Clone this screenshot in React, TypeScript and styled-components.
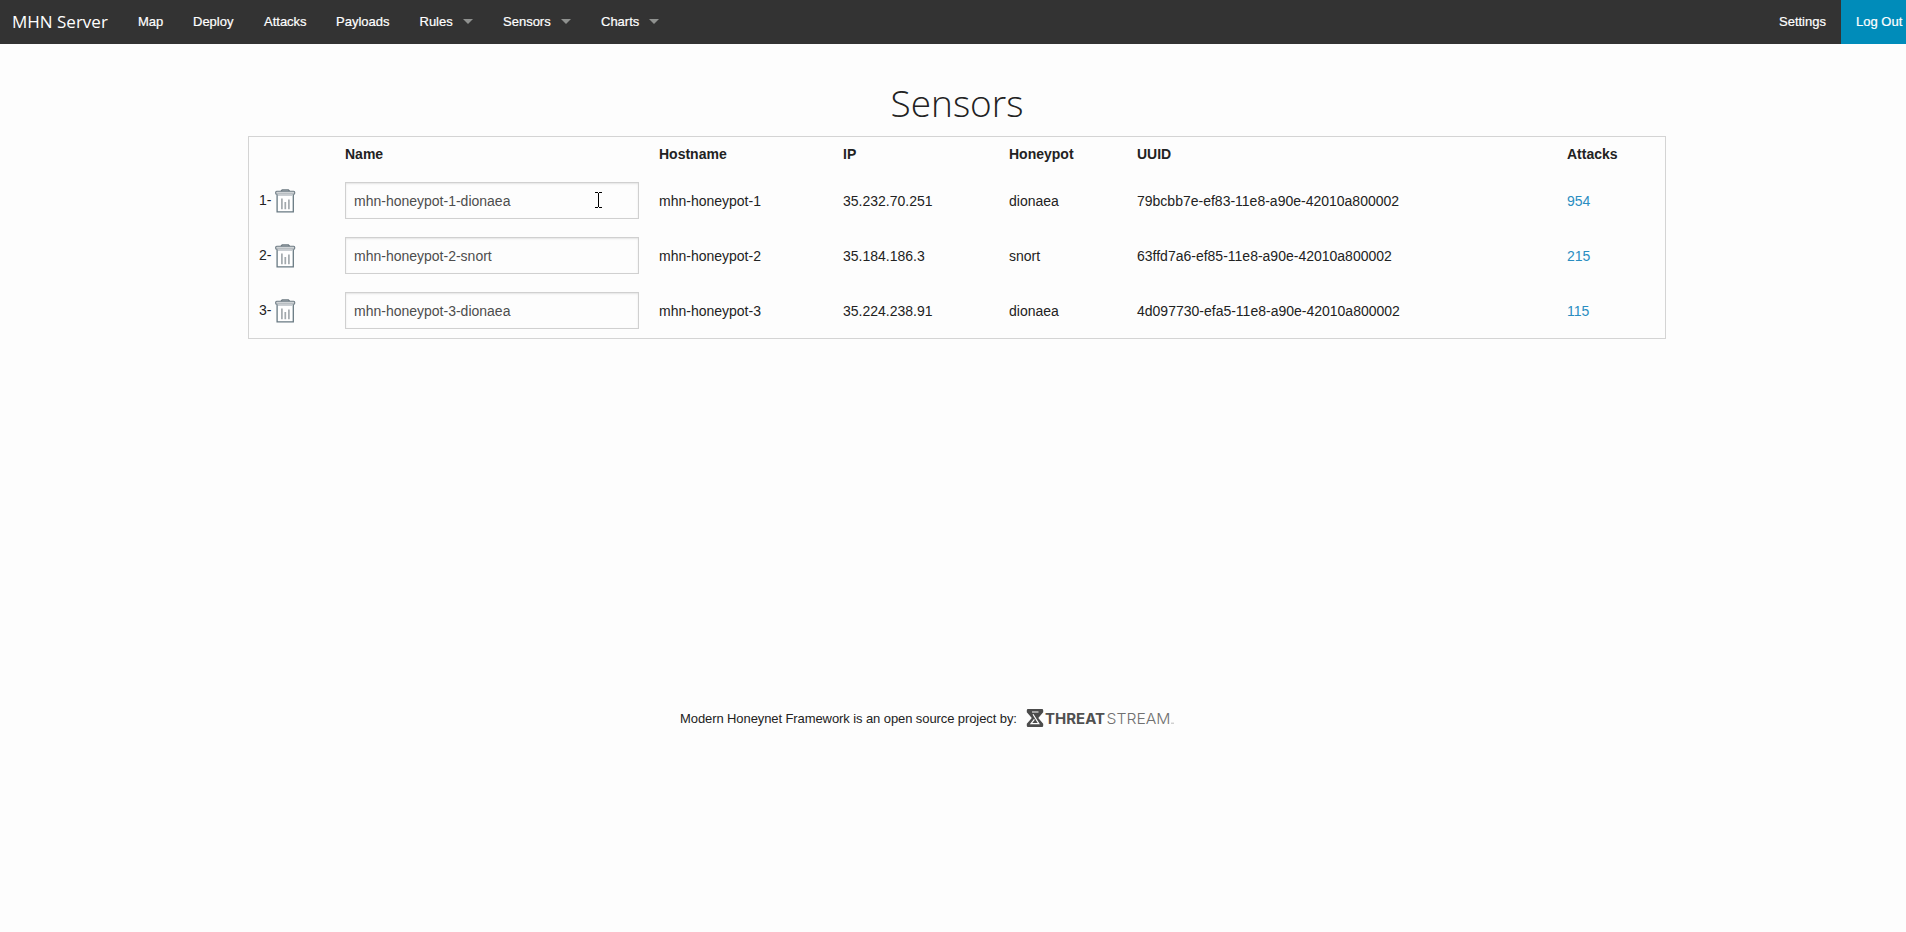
import React from 'react';
import styled, { createGlobalStyle } from 'styled-components';

const GlobalStyle = createGlobalStyle`
  *, *::before, *::after { box-sizing: border-box; }
  html, body { margin: 0; padding: 0; background: #fdfdfd; overflow: hidden; }
  body { font-family: 'Liberation Sans', Arial, sans-serif; color: #222; }
`;

const Page = styled.div`
  height: 932px;
  display: flex;
  flex-direction: column;
  overflow: hidden;
`;

const TopBar = styled.nav`
  display: flex;
  height: 44px;
  flex: none;
  background: #333;
  color: #fff;
`;

const Brand = styled.a`
  width: 123px;
  padding-left: 12px;
  font: 400 17px/43px 'Open Sans', sans-serif;
`;

const NavItem = styled.a<{ $width: number; $active?: boolean }>`
  display: flex;
  align-items: center;
  flex: none;
  width: ${(p) => p.$width}px;
  padding: 0 0 2px 15px;
  font-size: 13px;
  height: 44px;
  white-space: nowrap;
  -webkit-text-stroke: 0.2px #fff;
  background: ${(p) => (p.$active ? '#008cba' : 'transparent')};
`;

const Caret = styled.span`
  margin: 0 15px 0 auto;
  border: 5px solid transparent;
  border-top-color: #8f918f;
  border-bottom-width: 0;
`;

const Spacer = styled.div`
  flex: 1;
`;

const Title = styled.h1`
  margin: 33px 0 0;
  padding-left: 8px;
  height: 59px;
  text-align: center;
  font: 300 37px/52px 'Open Sans', sans-serif;
`;

const Table = styled.table`
  width: 1418px;
  margin-left: 248px;
  flex: none;
  table-layout: fixed;
  border-collapse: separate;
  border-spacing: 0;
  border: 1px solid #d4d4d4;
  font-size: 14px;
  line-height: 18px;
`;

const Th = styled.th<{ $width: number }>`
  width: ${(p) => p.$width}px;
  height: 36px;
  padding: 8px 10px 10px;
  text-align: left;
`;

const Td = styled.td`
  height: 55px;
  padding: 9px 10px 8px;
  white-space: nowrap;
  vertical-align: middle;
`;

const InputCell = styled(Td)`
  padding: 9px 10px;
`;

const Index = styled.div`
  display: flex;
  align-items: center;
  height: 37px;
  padding-bottom: 3px;
`;

const NameInput = styled.input`
  display: block;
  width: 294px;
  height: 37px;
  padding: 9px 8px 8px;
  border: 1px solid #d0d0d0;
  border-radius: 0;
  outline: none;
  background: #fdfdfd;
  box-shadow: inset 0 1px 2px rgba(0, 0, 0, 0.1);
  color: #4d4d4d;
  font: 14px/18px 'Liberation Sans', Arial, sans-serif;
`;

const NameField = styled.div`
  position: relative;
`;

const TextCursor = styled.svg`
  position: absolute;
  left: 250px;
  top: 10px;
`;

const TrashSvg = styled.svg`
  margin: 2px 0 0 3.6px;
`;

const CountLink = styled.a`
  color: #2a8dc1;
`;

const Footer = styled.footer`
  display: flex;
  align-items: center;
  height: 30px;
  margin: 364px 0 0 680px;
  font-size: 13px;
  white-space: nowrap;
`;

const FooterText = styled.span`
  width: 346px;
  letter-spacing: -0.09px;
`;

const LogoSvg = styled.svg`
  margin-top: 2px;
`;

function Trash() {
  return (
    <TrashSvg width="21" height="24" viewBox="0 0 21 24" fill="none">
      <path d="M6 2.2 7.2 1h6.2l1.2 1.2" stroke="#6b7880" strokeWidth="1.3" />
      <rect x="0.7" y="2.3" width="19" height="3" rx="1" fill="#d0d4d7" stroke="#6f7c84" strokeWidth="1.1" />
      <path d="M2.1 5.5v17.3h16.2V5.5" fill="#fff" stroke="#687982" strokeWidth="1.3" />
      <path d="M3 6.4h14.5" stroke="#c3c9cd" />
      <path d="M6.9 9.5v10.8M10.3 13v7.3M13.9 10.5v9.8" stroke="#a4aaae" strokeWidth="1.7" />
    </TrashSvg>
  );
}

function Logo() {
  return (
    <LogoSvg width="150" height="22" viewBox="0 0 150 22" fontFamily="Inter, sans-serif">
      <path
        d="M2 1h14q1.2 0 1.2 1.2v2L12.3 10l4.9 5.7v2.1q0 1.2-1.2 1.2H2Q.8 19 .8 17.8v-2L5.8 10 .8 4.2v-2Q.8 1 2 1Z"
        fill="#4b4b4b"
      />
      <path d="M6 4h6.5M7 6.2l5.8 9.4H5l3.4-4.2" fill="none" stroke="#fdfdfd" strokeWidth="1.2" />
      <text x="19" y="15.7" fontSize="15" fontWeight="700" fill="#505050" textLength="60" lengthAdjust="spacingAndGlyphs">THREAT</text>
      <text x="80.5" y="15.7" fontSize="15" fontWeight="300" fill="#707070" textLength="64" lengthAdjust="spacingAndGlyphs">STREAM</text>
      <path d="M145 15.2h3" stroke="#bbb" />
    </LogoSvg>
  );
}

const navItems = [
  { label: 'Map', width: 55 },
  { label: 'Deploy', width: 71 },
  { label: 'Attacks', width: 72 },
  { label: 'Payloads', width: 83.5 },
  { label: 'Rules', width: 83.5, menu: true },
  { label: 'Sensors', width: 98, menu: true },
  { label: 'Charts', width: 88, menu: true },
];

const columns = [
  { label: '', width: 86 },
  { label: 'Name', width: 314 },
  { label: 'Hostname', width: 184 },
  { label: 'IP', width: 166 },
  { label: 'Honeypot', width: 128 },
  { label: 'UUID', width: 430 },
  { label: 'Attacks', width: 108 },
];

const sensors = [
  { name: 'mhn-honeypot-1-dionaea', host: 'mhn-honeypot-1', ip: '35.232.70.251', honeypot: 'dionaea', uuid: '79bcbb7e-ef83-11e8-a90e-42010a800002', attacks: 954 },
  { name: 'mhn-honeypot-2-snort', host: 'mhn-honeypot-2', ip: '35.184.186.3', honeypot: 'snort', uuid: '63ffd7a6-ef85-11e8-a90e-42010a800002', attacks: 215 },
  { name: 'mhn-honeypot-3-dionaea', host: 'mhn-honeypot-3', ip: '35.224.238.91', honeypot: 'dionaea', uuid: '4d097730-efa5-11e8-a90e-42010a800002', attacks: 115 },
];

export default function App() {
  return (
    <Page>
      <GlobalStyle />
      <TopBar>
        <Brand>MHN Server</Brand>
        {navItems.map((item) => (
          <NavItem key={item.label} $width={item.width}>
            {item.label}
            {item.menu && <Caret />}
          </NavItem>
        ))}
        <Spacer />
        <NavItem $width={77}>Settings</NavItem>
        <NavItem $width={65} $active>Log Out</NavItem>
      </TopBar>
      <Title>Sensors</Title>
      <Table>
        <thead>
          <tr>
            {columns.map((c) => (
              <Th key={c.label} $width={c.width}>{c.label}</Th>
            ))}
          </tr>
        </thead>
        <tbody>
          {sensors.map((s, i) => (
            <tr key={s.uuid}>
              <Td>
                <Index>
                  {i + 1}-<Trash />
                </Index>
              </Td>
              <InputCell>
                <NameField>
                  <NameInput defaultValue={s.name} />
                  {i === 0 && (
                    <TextCursor width="7" height="16" viewBox="0 0 7 16" shapeRendering="crispEdges">
                      <path d="M0 .5h3M4 .5h3M3.5 1v14M0 15.5h3M4 15.5h3" stroke="#000" />
                    </TextCursor>
                  )}
                </NameField>
              </InputCell>
              <Td>{s.host}</Td>
              <Td>{s.ip}</Td>
              <Td>{s.honeypot}</Td>
              <Td>{s.uuid}</Td>
              <Td>
                <CountLink>{s.attacks}</CountLink>
              </Td>
            </tr>
          ))}
        </tbody>
      </Table>
      <Footer>
        <FooterText>Modern Honeynet Framework is an open source project by:</FooterText>
        <Logo />
      </Footer>
    </Page>
  );
}
